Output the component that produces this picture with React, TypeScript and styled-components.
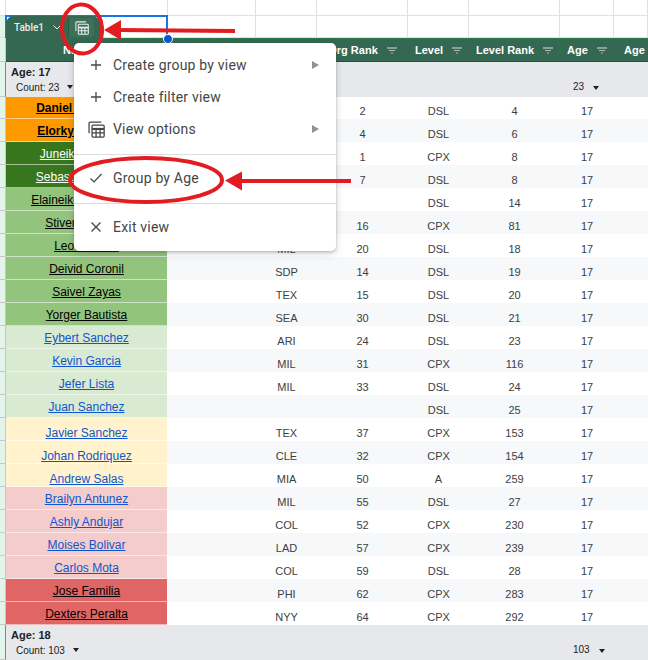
import React from "react";
import styled, { createGlobalStyle } from "styled-components";

const Global = createGlobalStyle`
  html, body { margin: 0; padding: 0; background: #fff; }
  #root { width: 648px; height: 660px; overflow: hidden; }
`;

const COLS = "161px 88px 61px 91px 61px 91px 54px 35px";
const TOP_COLS = "6px 162px 88px 61px 91px 61px 91px 54px 34px";

const Page = styled.div`
  position: relative;
  width: 648px;
  height: 660px;
  overflow: hidden;
  display: flex;
  flex-direction: column;
  font-family: "Liberation Sans", Arial, sans-serif;
  background: #fff;
`;

const BlankRow = styled.div<{ $h: number }>`
  height: ${(p) => p.$h}px;
  flex: none;
  display: grid;
  grid-template-columns: ${TOP_COLS};
  border-bottom: 1px solid #e1e1e1;
  box-sizing: border-box;
`;

const BlankCell = styled.div<{ $green?: boolean }>`
  border-right: 1px solid #e1e1e1;
  background: ${(p) => (p.$green ? "#e3f5ea" : "transparent")};
`;

const Body = styled.div`
  flex: none;
  display: flex;
`;

const Gutter = styled.div`
  width: 6px;
  flex: none;
  display: flex;
  flex-direction: column;
`;

const GutterCell = styled.div<{ $h: number; $dark: boolean }>`
  height: ${(p) => p.$h}px;
  flex: none;
  background: #e3f5ea;
  border-right: 1px solid ${(p) => (p.$dark ? "#80868b" : "#c4cbc7")};
  border-bottom: 1px solid #c4cbc7;
  box-sizing: border-box;
`;

const Table = styled.div`
  width: 642px;
  flex: none;
`;

const HeaderRow = styled.div`
  display: grid;
  grid-template-columns: ${COLS};
  height: 24px;
  background: #356853;
  border-top: 1px solid #2a7a4a;
  border-bottom: 1px solid #26503f;
  box-sizing: border-box;
`;

const HeaderCell = styled.div`
  display: flex;
  align-items: center;
  justify-content: center;
  gap: 9px;
  padding-left: 2px;
  color: #fff;
  font-size: 11px;
  font-weight: 700;
  white-space: nowrap;
`;

const LastHeaderCell = styled(HeaderCell)`
  justify-content: flex-start;
  padding-left: 11px;
`;

const GroupRow = styled.div`
  display: grid;
  grid-template-columns: ${COLS};
  height: 35px;
  background: #e7e8eb;
  box-sizing: border-box;
`;

const GroupLabel = styled.div`
  padding: 4px 0 0 5px;
  color: #202124;
  font-size: 11px;
  font-weight: 700;
`;

const CountLine = styled.div`
  display: flex;
  align-items: center;
  gap: 8px;
  margin: 4px 0 0 5px;
  font-size: 10px;
  font-weight: 400;
`;

const GroupTotal = styled.div`
  grid-column: 7;
  display: flex;
  align-items: flex-end;
  justify-content: flex-start;
  gap: 9px;
  padding: 0 0 5px 14px;
  color: #202124;
  font-size: 10px;
`;

const Caret = styled.span`
  width: 0;
  height: 0;
  margin-bottom: 2px;
  border-left: 3.5px solid transparent;
  border-right: 3.5px solid transparent;
  border-top: 4px solid #202124;
`;

const Row = styled.div<{ $alt: boolean; $h: number }>`
  display: grid;
  grid-template-columns: ${COLS};
  height: ${(p) => p.$h}px;
  background: ${(p) => (p.$alt ? "#f6f8f9" : "#fff")};
`;

const NameCell = styled.div<{ $bg: string; $fg: string; $top: number; $bold: boolean }>`
  display: flex;
  justify-content: center;
  align-items: flex-start;
  padding-top: ${(p) => p.$top}px;
  background: ${(p) => p.$bg};
  color: ${(p) => p.$fg};
  font-size: 12px;
  font-weight: ${(p) => (p.$bold ? 700 : 400)};
  white-space: nowrap;
  text-decoration: underline;
  border-bottom: 1px solid rgba(255, 255, 255, 0.55);
  box-sizing: border-box;
`;

const DataCell = styled.div`
  display: flex;
  justify-content: center;
  align-items: flex-end;
  padding: 0 0 2px 2px;
  color: #3c4043;
  font-size: 11px;
  box-sizing: border-box;
`;

const Selection = styled.div`
  position: absolute;
  left: 5px;
  top: 15px;
  width: 163px;
  height: 23px;
  border: 2px solid #1a73e8;
  border-bottom: none;
  box-sizing: border-box;
  pointer-events: none;
`;

const Handle = styled.div`
  position: absolute;
  left: 163px;
  top: 34px;
  width: 10px;
  height: 10px;
  border-radius: 50%;
  background: #0b57d0;
  border: 1px solid #fff;
  box-sizing: border-box;
`;

const Tab = styled.div`
  position: absolute;
  left: 6px;
  top: 16px;
  width: 94px;
  height: 23px;
  display: flex;
  align-items: center;
  background: #356853;
  border-radius: 8px 8px 0 0;
  color: #e8eeeb;
  font-family: Roboto, "Liberation Sans", sans-serif;
  font-size: 10px;
  font-weight: 500;
  padding-left: 8px;
  box-sizing: border-box;
`;

const TabDivider = styled.span`
  position: absolute;
  left: 62px;
  top: 2px;
  width: 1px;
  height: 19px;
  background: #2b5745;
`;

const TabIconBox = styled.span`
  position: absolute;
  left: 63px;
  top: 2px;
  width: 25px;
  height: 19px;
  display: flex;
  align-items: center;
  justify-content: center;
  border-radius: 3px;
  background: #3d7059;
`;

const Menu = styled.div`
  position: absolute;
  left: 74px;
  top: 43px;
  width: 262px;
  height: 208px;
  padding: 6px 0;
  background: #fff;
  border-radius: 5px;
  box-shadow: 0 1px 3px rgba(60, 64, 67, 0.3), 0 3px 8px rgba(60, 64, 67, 0.18);
  box-sizing: border-box;
  color: #444746;
  font-family: Roboto, "Liberation Sans", sans-serif;
  font-size: 14px;
  letter-spacing: 0.2px;
`;

const MenuItem = styled.div`
  height: 32px;
  display: flex;
  align-items: center;
  padding: 0 17px 0 15px;
`;

const MenuIcon = styled.span`
  width: 24px;
  display: flex;
  color: #444746;
  flex: none;
`;

const WideMenuIcon = styled(MenuIcon)`
  margin-left: -1px;
  width: 25px;
`;

const MenuLabel = styled.span`
  flex: 1;
`;

const SubArrow = styled.span`
  width: 0;
  height: 0;
  border-top: 4px solid transparent;
  border-bottom: 4px solid transparent;
  border-left: 7px solid #8f9295;
`;

const Divider = styled.div`
  height: 1px;
  background: #dadce0;
  margin: 9px 0 7px;
`;

const Overlay = styled.svg`
  position: absolute;
  left: 0;
  top: 0;
  pointer-events: none;
`;

const FilterIcon = () => (
  <svg width="10" height="7" viewBox="0 0 10 7" fill="none" strokeWidth="1">
    <path d="M0 1h10" stroke="#d3dfd9" />
    <path d="M2 3.5h6" stroke="#a6bdb1" />
    <path d="M4 6h2" stroke="#a6bdb1" />
  </svg>
);

const Plus = () => (
  <svg width="14" height="14" viewBox="0 0 14 14" stroke="#444746" strokeWidth="1.3">
    <path d="M7 2v10M2 7h10" />
  </svg>
);

const TableIcon = ({ color, size }: { color: string; size: number }) => (
  <svg width={size} height={size} viewBox="0 0 16 16" fill="none" stroke={color} strokeWidth="1.2">
    <path d="M1 11.5V2a1 1 0 0 1 1-1h10.5" />
    <rect x="3.8" y="3.8" width="11.4" height="11.4" rx="1" />
    <path d="M3.8 7.5h11.4" strokeWidth="2" />
    <path d="M3.8 11.2h11.4M7.6 7.5v7.7M11.4 7.5v7.7" />
  </svg>
);

type Cells = [string, string, string, string, string, string];

const GROUPS: { bg: string; fg: string; bold?: boolean; rows: Cells[] }[] = [
  {
    bg: "#ff9900",
    fg: "#000",
    bold: true,
    rows: [
      ["Daniel Hernandez", "", "2", "DSL", "4", "17"],
      ["Elorky Rodriguez", "", "4", "DSL", "6", "17"],
    ],
  },
  {
    bg: "#38761d",
    fg: "#fff",
    rows: [
      ["Juneiker Caceres", "", "1", "CPX", "8", "17"],
      ["Sebastian Ramirez", "", "7", "DSL", "8", "17"],
    ],
  },
  {
    bg: "#93c47d",
    fg: "#000",
    rows: [
      ["Elaineiker Rodriguez", "", "", "DSL", "14", "17"],
      ["Stiven Martinez", "", "16", "CPX", "81", "17"],
      ["Leonel Ortiz", "MIL", "20", "DSL", "18", "17"],
      ["Deivid Coronil", "SDP", "14", "DSL", "19", "17"],
      ["Saivel Zayas", "TEX", "15", "DSL", "20", "17"],
      ["Yorger Bautista", "SEA", "30", "DSL", "21", "17"],
    ],
  },
  {
    bg: "#d9ead3",
    fg: "#1155cc",
    rows: [
      ["Eybert Sanchez", "ARI", "24", "DSL", "23", "17"],
      ["Kevin Garcia", "MIL", "31", "CPX", "116", "17"],
      ["Jefer Lista", "MIL", "33", "DSL", "24", "17"],
      ["Juan Sanchez", "", "", "DSL", "25", "17"],
    ],
  },
  {
    bg: "#fff2cc",
    fg: "#1155cc",
    rows: [
      ["Javier Sanchez", "TEX", "37", "CPX", "153", "17"],
      ["Johan Rodriquez", "CLE", "32", "CPX", "154", "17"],
      ["Andrew Salas", "MIA", "50", "A", "259", "17"],
    ],
  },
  {
    bg: "#f4cccc",
    fg: "#1155cc",
    rows: [
      ["Brailyn Antunez", "MIL", "55", "DSL", "27", "17"],
      ["Ashly Andujar", "COL", "52", "CPX", "230", "17"],
      ["Moises Bolivar", "LAD", "57", "CPX", "239", "17"],
      ["Carlos Mota", "COL", "59", "DSL", "28", "17"],
    ],
  },
  {
    bg: "#e06666",
    fg: "#000",
    rows: [
      ["Jose Familia", "PHI", "62", "CPX", "283", "17"],
      ["Dexters Peralta", "NYY", "64", "CPX", "292", "17"],
    ],
  },
];

const HEADERS = ["Name", "", "Org", "Org Rank", "Level", "Level Rank", "Age"];
const BLANKS = [0, 1, 2, 3, 4, 5, 6, 7, 8];
const LOW_ROWS = ["Javier Sanchez", "Johan Rodriquez", "Andrew Salas"];
const TOTAL_ROWS = GROUPS.reduce((sum, g) => sum + g.rows.length, 0);
const GUTTER: { h: number; dark: boolean }[] = [
  { h: 24, dark: false },
  { h: 35, dark: true },
  ...Array.from({ length: TOTAL_ROWS }, (_, i) => ({ h: i === 0 ? 22 : 23, dark: false })),
  { h: 35, dark: true },
];

export default function App() {
  let index = 0;
  return (
    <Page>
      <Global />
      <BlankRow $h={16}>{BLANKS.map((b) => <BlankCell key={b} />)}</BlankRow>
      <BlankRow $h={22}>{BLANKS.map((b) => <BlankCell key={b} $green={b === 0} />)}</BlankRow>
      <Body>
        <Gutter>
          {GUTTER.map((c, i) => <GutterCell key={i} $h={c.h} $dark={c.dark} />)}
        </Gutter>
        <Table>
          <HeaderRow>
            {HEADERS.map((h, i) => (
              <HeaderCell key={i}>
                {h}
                {h && <FilterIcon />}
              </HeaderCell>
            ))}
            <LastHeaderCell>Age</LastHeaderCell>
          </HeaderRow>
          <GroupRow>
            <GroupLabel>
              Age: 17
              <CountLine>Count: 23 <Caret /></CountLine>
            </GroupLabel>
            <GroupTotal>23 <Caret /></GroupTotal>
          </GroupRow>
          {GROUPS.map((g) =>
            g.rows.map((r) => {
              const i = index++;
              const low = LOW_ROWS.includes(r[0]);
              return (
                <Row key={r[0]} $alt={i % 2 === 1} $h={i === 0 ? 22 : 23}>
                  <NameCell $bg={g.bg} $fg={g.fg} $bold={!!g.bold} $top={low ? 8 : i === 0 ? 4 : 5}>
                    {r[0]}
                  </NameCell>
                  <DataCell />
                  <DataCell>{r[1]}</DataCell>
                  <DataCell>{r[2]}</DataCell>
                  <DataCell>{r[3]}</DataCell>
                  <DataCell>{r[4]}</DataCell>
                  <DataCell>{r[5]}</DataCell>
                  <DataCell />
                </Row>
              );
            })
          )}
          <GroupRow>
            <GroupLabel>
              Age: 18
              <CountLine>Count: 103 <Caret /></CountLine>
            </GroupLabel>
            <GroupTotal>103 <Caret /></GroupTotal>
          </GroupRow>
        </Table>
      </Body>

      <Selection />
      <Handle />
      <Tab>
        Table1
        <svg width="8" height="5" viewBox="0 0 8 5" fill="none" stroke="#e8eeeb" strokeWidth="1" style={{ marginLeft: 9 }}>
          <path d="M.5.5L4 4 7.5.5" />
        </svg>
        <TabDivider />
        <TabIconBox><TableIcon color="#e8eeeb" size={14} /></TabIconBox>
      </Tab>

      <Menu>
        <MenuItem>
          <MenuIcon><Plus /></MenuIcon>
          <MenuLabel>Create group by view</MenuLabel>
          <SubArrow />
        </MenuItem>
        <MenuItem>
          <MenuIcon><Plus /></MenuIcon>
          <MenuLabel>Create filter view</MenuLabel>
        </MenuItem>
        <MenuItem>
          <WideMenuIcon><TableIcon color="#444746" size={17} /></WideMenuIcon>
          <MenuLabel>View options</MenuLabel>
          <SubArrow />
        </MenuItem>
        <Divider />
        <MenuItem>
          <MenuIcon>
            <svg width="14" height="14" viewBox="0 0 14 14" fill="none" stroke="#444746" strokeWidth="1.2">
              <path d="M1.5 7.5l3.5 3.5 7.5-8" />
            </svg>
          </MenuIcon>
          <MenuLabel>Group by Age</MenuLabel>
        </MenuItem>
        <Divider />
        <MenuItem>
          <MenuIcon>
            <svg width="14" height="14" viewBox="0 0 14 14" fill="none" stroke="#444746" strokeWidth="1.3">
              <path d="M2.5 2.5l9 9M11.5 2.5l-9 9" />
            </svg>
          </MenuIcon>
          <MenuLabel>Exit view</MenuLabel>
        </MenuItem>
      </Menu>

      <Overlay width="648" height="660" viewBox="0 0 648 660" fill="none">
        <ellipse cx="82" cy="29" rx="20" ry="24.5" stroke="#e21c21" strokeWidth="4" transform="rotate(-6 82 29)" />
        <path d="M235 31L118 30" stroke="#e21c21" strokeWidth="4" />
        <path d="M104 30l17-10v20z" fill="#e21c21" />
        <ellipse cx="146" cy="180" rx="76" ry="22" stroke="#e21c21" strokeWidth="4" />
        <path d="M351 181H240" stroke="#e21c21" strokeWidth="4" />
        <path d="M225 180.500l17-9v19z" fill="#e21c21" />
      </Overlay>
    </Page>
  );
}
